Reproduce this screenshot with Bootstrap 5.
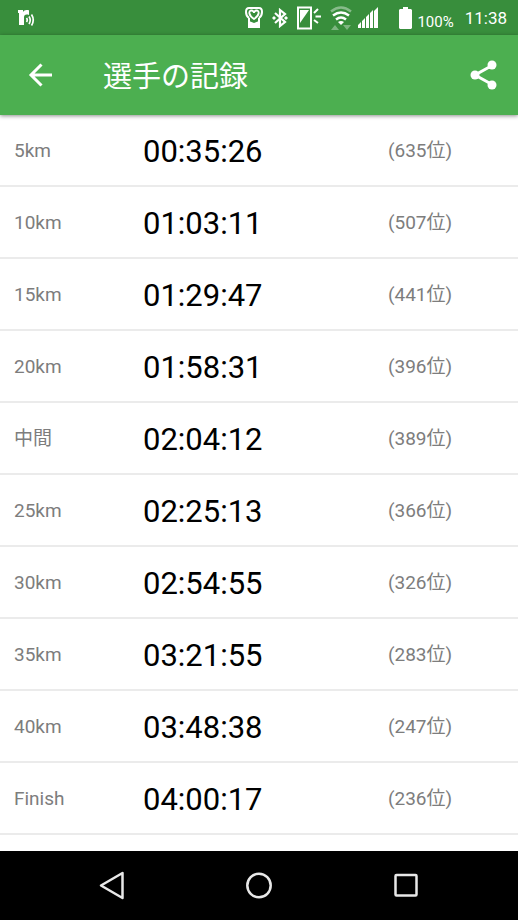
<!DOCTYPE html>
<html lang="ja">
<head>
<meta charset="utf-8">
<meta name="viewport" content="width=device-width, initial-scale=1">
<title>選手の記録</title>
<link href="https://cdn.jsdelivr.net/npm/bootstrap@5.3.0/dist/css/bootstrap.min.css" rel="stylesheet">
<style>
body { font-family: Roboto, "Noto Sans CJK JP", sans-serif; color: #000; background: #fff; }
svg { display: block; flex: none; }
.status-bar { height: 35px; background: #388e3c; color: #fff; padding: 0 11px 0 18px; }
.status-icons { gap: 8px; }
.battery-icon { margin-left: 19px; }
.battery-level { font-size: 15px; line-height: 20px; padding-top: 8px; margin: 0 11px 0 4px; }
.clock { font-size: 17px; line-height: 20px; }
.app-bar { height: 80px; background: #4caf50; color: #fff; padding: 0 16px 0 24px; box-shadow: 0 1px 4px rgba(0,0,0,.45); z-index: 1; }
.app-title { font-size: 29px; line-height: 40px; font-weight: 400; margin-left: 47px; padding-top: 4px; }
.icon-btn { color: #fff; line-height: 0; }
.splits { --bs-table-bg: transparent; table-layout: fixed; border-collapse: separate; border-spacing: 0; }
.splits th, .splits td { height: 72px; padding: 2px 0 0; border-bottom: 2px solid #ebebeb; font-weight: 400; line-height: 32px; }
.splits .point { width: 27.6%; padding-left: 14px; font-size: 19px; color: #7d7d7d; }
.splits .split-time { width: 47.3%; padding-top: 4px; font-size: 31px; color: #000; }
.splits .rank { font-size: 19px; color: #7d7d7d; }
.nav-keys { height: 69px; background: #000; }
.nav-keys button { width: 28.4%; height: 100%; color: #e8e8e8; }
</style>
<script src="https://cdn.jsdelivr.net/npm/bootstrap@5.3.0/dist/js/bootstrap.bundle.min.js"></script>
</head>
<body>
<div class="d-flex flex-column min-vh-100">
  <div class="status-bar d-flex align-items-center justify-content-between">
    <svg width="17" height="18" viewBox="0 0 17 18" fill="none" stroke="#fff" aria-hidden="true">
      <path fill="#fff" stroke="none" d="M0 1h5v2c1-2 3-2.500 6-1.700V6C7.500 5 6 6 6 8.500V16H1V4H0z"/>
      <path stroke-width="1.700" d="M8.500 9q1.500 2 0 4M11 7.500q2.500 3.500 0 7.500M13.500 5.500q3.500 5.500 0 11"/>
    </svg>
    <div class="d-flex align-items-center">
      <div class="status-icons d-flex align-items-center">
        <svg width="18" height="24" viewBox="0 0 18 24" fill="none" stroke="#fff" aria-hidden="true">
          <path stroke-width="2" d="M4 12C0 9 0 2 4 2h10c4 0 4 7 0 10"/>
          <path stroke-width="1.800" d="M9 13C3 9 3.500 4.500 6.500 4.500 8 4.500 9 6 9 7c0-1 1-2.500 2.500-2.500 3 0 3.500 4.500-2.500 8.500z"/>
          <path stroke-width="2" d="M4 12v9h10v-9"/>
          <path fill="#fff" stroke="none" d="M4 15l5 2 5-2v6H4z"/>
        </svg>
        <svg width="18" height="20" viewBox="0 0 18 20" fill="none" stroke="#fff" stroke-width="2.200" aria-hidden="true">
          <path d="M4 5l10 9-5 4V2l5 4-10 9"/>
          <path fill="#fff" stroke="none" d="M1 10l2-2 2 2-2 2zM13 10l2-2 2 2-2 2z"/>
        </svg>
        <svg width="24" height="24" viewBox="0 0 24 24" fill="none" stroke="#fff" stroke-width="2" aria-hidden="true">
          <path d="M1 1.500h13v21H1z"/>
          <path fill="#fff" stroke="none" d="M3 4h9L3 17z"/>
          <path d="M17 7l4-4M18.500 10.500H24M17 14l4 3"/>
        </svg>
        <svg width="24" height="26" viewBox="0 0 24 26" fill="none" stroke="#fff" stroke-width="2.500" aria-hidden="true">
          <path opacity=".4" d="M2 6.500q10-8 20 0"/>
          <path d="M4 10.500q8-6 16 0M7 14.500q5-4 10 0"/>
          <path fill="#fff" stroke="none" d="M9 17q3-2 6 0l-3 3z"/>
          <path fill="#fff" stroke="none" opacity=".35" d="M2 25l4-5 4 5zM14 20h8l-4 5z"/>
        </svg>
      </div>
      <svg class="ms-1" width="22" height="22" viewBox="0 0 22 22" fill="#fff" aria-hidden="true">
        <path d="M1 21v-3l3-3v6zM5 21v-7l3-3v10zM9 21V10l3-3v14zM13 21V6l3-3v18zM17 21V4l4-4v21z"/>
      </svg>
      <svg class="battery-icon" width="15" height="24" viewBox="0 0 15 24" fill="#fff" aria-hidden="true">
        <path d="M5 1h5v2h3l1 1v18l-1 1H2l-1-1V4l1-1h3z"/>
      </svg>
      <span class="battery-level">100%</span>
      <span class="clock">11:38</span>
    </div>
  </div>

  <header class="app-bar d-flex align-items-center position-relative">
    <button type="button" class="icon-btn btn p-0 border-0" aria-label="戻る">
      <svg width="32" height="32" viewBox="0 0 32 32" fill="none" stroke="#fff" stroke-width="3" aria-hidden="true"><path d="M28 16H7M17.500 5.500L7 16l10.500 10.500"/></svg>
    </button>
    <h1 class="app-title mb-0">選手の記録</h1>
    <button type="button" class="icon-btn btn p-0 border-0 ms-auto" aria-label="共有">
      <svg width="36" height="36" viewBox="0 0 36 36" aria-hidden="true">
        <path d="M27 8L9 18l18 10" fill="none" stroke="#fff" stroke-width="3"/>
        <g fill="#fff"><circle cx="26" cy="8" r="4.500"/><circle cx="9" cy="18" r="4.500"/><circle cx="26" cy="28" r="4.500"/></g>
      </svg>
    </button>
  </header>

  <main class="flex-grow-1">
    <table class="splits table align-middle mb-0">
      <tbody>
        <tr><th scope="row" class="point">5km</th><td class="split-time">00:35:26</td><td class="rank">(635位)</td></tr>
        <tr><th scope="row" class="point">10km</th><td class="split-time">01:03:11</td><td class="rank">(507位)</td></tr>
        <tr><th scope="row" class="point">15km</th><td class="split-time">01:29:47</td><td class="rank">(441位)</td></tr>
        <tr><th scope="row" class="point">20km</th><td class="split-time">01:58:31</td><td class="rank">(396位)</td></tr>
        <tr><th scope="row" class="point">中間</th><td class="split-time">02:04:12</td><td class="rank">(389位)</td></tr>
        <tr><th scope="row" class="point">25km</th><td class="split-time">02:25:13</td><td class="rank">(366位)</td></tr>
        <tr><th scope="row" class="point">30km</th><td class="split-time">02:54:55</td><td class="rank">(326位)</td></tr>
        <tr><th scope="row" class="point">35km</th><td class="split-time">03:21:55</td><td class="rank">(283位)</td></tr>
        <tr><th scope="row" class="point">40km</th><td class="split-time">03:48:38</td><td class="rank">(247位)</td></tr>
        <tr><th scope="row" class="point">Finish</th><td class="split-time">04:00:17</td><td class="rank">(236位)</td></tr>
      </tbody>
    </table>
  </main>

  <nav class="nav-keys d-flex justify-content-center" aria-label="システム">
    <button type="button" class="btn p-0 border-0 d-flex align-items-center justify-content-center" aria-label="戻る">
      <svg width="28" height="32" viewBox="0 0 28 32" fill="none" stroke="currentColor" stroke-width="2.500" stroke-linejoin="round" aria-hidden="true"><path d="M24.500 3v25L3 15.500z"/></svg>
    </button>
    <button type="button" class="btn p-0 border-0 d-flex align-items-center justify-content-center" aria-label="ホーム">
      <svg width="28" height="28" viewBox="0 0 28 28" fill="none" stroke="currentColor" stroke-width="2.500" aria-hidden="true"><circle cx="14" cy="13.500" r="11.700"/></svg>
    </button>
    <button type="button" class="btn p-0 border-0 d-flex align-items-center justify-content-center" aria-label="履歴">
      <svg width="28" height="28" viewBox="0 0 28 28" fill="none" stroke="currentColor" stroke-width="2.500" aria-hidden="true"><rect x="3.500" y="3" width="21" height="20.500" rx="1"/></svg>
    </button>
  </nav>
</div>
</body>
</html>
